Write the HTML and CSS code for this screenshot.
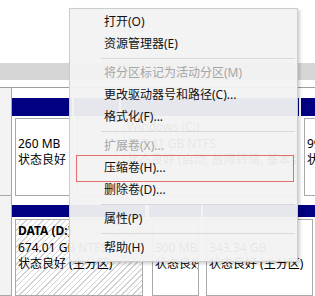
FILE: index.html
```html
<!DOCTYPE html>
<html lang="zh-CN">
<head>
    <meta charset="UTF-8">
    <title>磁盘管理</title>
    <link rel="stylesheet" href="styles.css">
</head>
<body>
    <div class="volumes"></div>
    <div class="splitter"></div>
    <div class="splitter-gap"></div>
    <div class="disks">
        <div class="disk disk-0">
            <div class="disk-label"></div>
            <div class="part" style="width: 60px">
                <div class="bar"></div>
                <div class="body"><div>&nbsp;</div><div>260 MB</div><div>状态良好</div></div>
            </div>
            <div class="part" style="width: 45px">
                <div class="bar"></div>
                <div class="body"></div>
            </div>
            <div class="part" style="width: 178px">
                <div class="bar"></div>
                <div class="body"><div class="name">Windows (C:)</div><div>237.41 GB NTFS</div><div>状态良好 (启动, 故障转储, 基本数据分区)</div></div>
            </div>
            <div class="part grow">
                <div class="bar"></div>
                <div class="body"><div>&nbsp;</div><div>990 MB</div><div>状态良好</div></div>
            </div>
        </div>
        <div class="disk disk-1">
            <div class="disk-label"></div>
            <div class="part" style="width: 133px">
                <div class="bar"></div>
                <div class="body hatched"><div class="name bold">DATA (D:)</div><div>674.01 GB NTFS</div><div>状态良好 (主分区)</div></div>
            </div>
            <div class="part" style="width: 52px; margin-left: 4px">
                <div class="bar"></div>
                <div class="body"><div>&nbsp;</div><div>300 MB</div><div>状态良好</div></div>
            </div>
            <div class="part grow">
                <div class="bar"></div>
                <div class="body"><div>&nbsp;</div><div>343.34 GB</div><div>状态良好 (主分区)</div></div>
            </div>
        </div>
    </div>

    <div class="menu">
        <div class="item">打开(O)</div>
        <div class="item">资源管理器(E)</div>
        <div class="sep"></div>
        <div class="item off">将分区标记为活动分区(M)</div>
        <div class="item">更改驱动器号和路径(C)...</div>
        <div class="item">格式化(F)...</div>
        <div class="sep"></div>
        <div class="item off">扩展卷(X)...</div>
        <div class="item">压缩卷(H)...</div>
        <div class="item">删除卷(D)...</div>
        <div class="sep"></div>
        <div class="item">属性(P)</div>
        <div class="sep"></div>
        <div class="item">帮助(H)</div>
        <div class="mark"></div>
    </div>
</body>
</html>
```

FILE: styles.css
```css
body {
    margin: 0;
    width: 315px;
    height: 296px;
    overflow: hidden;
    position: relative;
    background: #fff;
    font-family: "Noto Sans", "Noto Sans CJK SC", sans-serif;
    font-size: 12px;
    color: #000;
}
.volumes {
    height: 63px;
    background: #fff;
}
.splitter {
    height: 17px;
    background: #d6d6d6;
}
.splitter-gap {
    height: 7px;
}
.disks {
    border-top: 1px solid #9c9c9c;
}
.disk {
    display: flex;
}
.disk-0 {
    height: 108px;
}
.disk-1 {
    height: 100px;
}
.disk-label {
    width: 11px;
    flex: none;
    background: #f3f3f3;
    border-right: 1px solid #a8a8a8;
    border-bottom: 1px solid #a8a8a8;
}
.part {
    display: flex;
    flex-direction: column;
    flex: none;
    margin-left: 2px;
}
.disk-label + .part {
    margin-left: 0;
}
.part.grow {
    flex: 1;
}
.disk-0 .part {
    padding-top: 10px;
}
.disk-1 .part {
    padding-top: 9px;
}
.bar {
    background: #000080;
    flex: none;
}
.disk-0 .bar {
    height: 18px;
}
.disk-1 .bar {
    height: 12px;
}
.body {
    flex: 1;
    margin: 2px 2px 0 3px;
    border: 1px solid #a9a9a9;
    background: #fff;
    padding: 0 2px;
    line-height: 16.5px;
    white-space: nowrap;
    overflow: hidden;
}
.disk-1 .body {
    padding-top: 3px;
}
.hatched {
    background: repeating-linear-gradient(135deg, #fff 0 3px, #d2d2d2 3px 4px);
}
.bold {
    font-weight: bold;
}
.menu {
    position: absolute;
    left: 69px;
    top: 8px;
    width: 229px;
    box-sizing: border-box;
    padding: 2px 0;
    border: 1px solid #cdcdcd;
    background: rgba(242, 242, 242, 0.95);
    box-shadow: 2px 2px 3px rgba(0, 0, 0, 0.18);
}
.item {
    height: 22px;
    line-height: 22px;
    padding-left: 34px;
    color: #111;
    white-space: nowrap;
}
.item.off {
    color: #a6a6a6;
}
.sep {
    height: 1px;
    margin: 3px 2px 3px 31px;
    background: #d9d9d9;
}
.mark {
    position: absolute;
    left: 6px;
    top: 146px;
    width: 218px;
    height: 27px;
    box-sizing: border-box;
    border: 1px solid #e36f6f;
}
```
